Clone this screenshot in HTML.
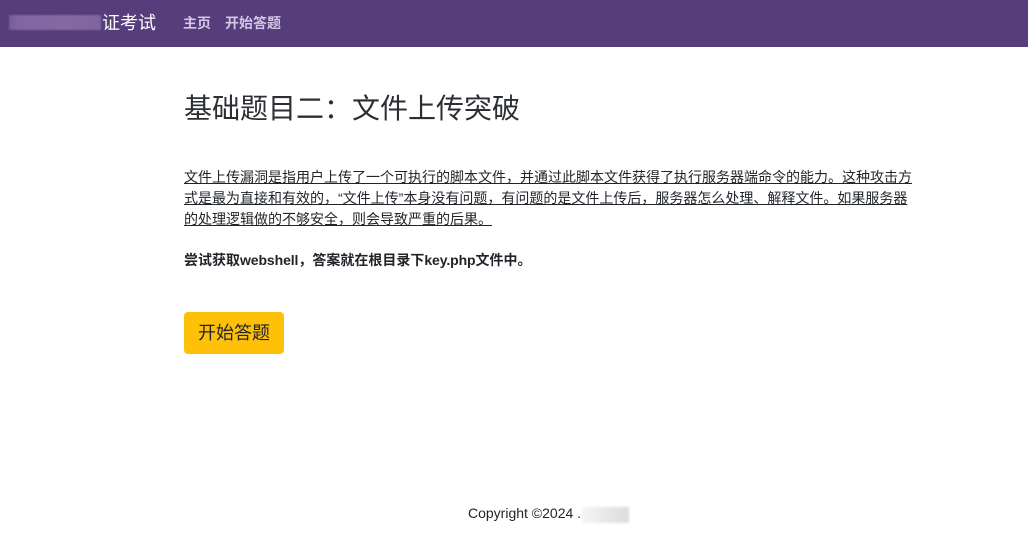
<!DOCTYPE html>
<html lang="zh">
<head>
<meta charset="utf-8">
<title>基础题目二：文件上传突破</title>
<style>
html,body{margin:0;padding:0;background:#fff;}
body{width:1028px;height:549px;overflow:hidden;position:relative;font-family:"Liberation Sans","Noto Sans CJK SC",sans-serif;color:#212529;}
.abs{position:absolute;white-space:pre;}
nav{position:absolute;left:0;top:0;width:1028px;height:47px;background:#563d7c;overflow:hidden;}
.blur{position:absolute;left:9px;top:15px;width:92px;height:15px;background:linear-gradient(90deg,#745a97 0,#8165a2 8%,#8368a3 60%,#7f64a0 100%);filter:blur(.8px);}
.brand{left:102px;top:10px;font-size:18px;line-height:26px;color:#fff;}
.link{top:13px;font-size:14px;line-height:21px;color:#d5c6e6;font-weight:bold;}
h1{margin:0;left:184px;top:88px;font-size:28px;line-height:42px;font-weight:400;color:#2b2e33;}
.l{left:184px;font-size:14px;line-height:21px;text-decoration:underline;color:#212529;}
.b{left:184px;top:250px;font-size:14px;line-height:21px;font-weight:bold;color:#212529;}
.b span{letter-spacing:-.1px;}
.btn{position:absolute;left:184px;top:312px;width:100px;height:42px;background:#ffc107;border-radius:4px;font-size:18px;line-height:42px;text-align:center;color:#212529;}
.foot{left:468px;top:503px;font-size:14px;line-height:21px;color:#212529;}
.smudge{position:absolute;left:582px;top:507px;width:47px;height:16px;background:linear-gradient(90deg,#f6f5f6 0,#e9e7ea 50%,#dddbde 100%);filter:blur(1px);}
</style>
</head>
<body>
<nav>
<div class="blur"></div>
<div class="abs brand">证考试</div>
<div class="abs link" style="left:183px">主页</div>
<div class="abs link" style="left:225px">开始答题</div>
</nav>
<h1 class="abs">基础题目二：文件上传突破</h1>
<div class="abs l" style="top:167px">文件上传漏洞是指用户上传了一个可执行的脚本文件，并通过此脚本文件获得了执行服务器端命令的能力。这种攻击方</div>
<div class="abs l" style="top:188px">式是最为直接和有效的，“文件上传”本身没有问题，有问题的是文件上传后，服务器怎么处理、解释文件。如果服务器</div>
<div class="abs l" style="top:209px">的处理逻辑做的不够安全，则会导致严重的后果。</div>
<div class="abs b">尝试获取<span>webshell</span>，答案就在根目录下<span>key.php</span>文件中。</div>
<div class="btn">开始答题</div>
<div class="abs foot">Copyright ©2024 .</div>
<div class="smudge"></div>
</body>
</html>
